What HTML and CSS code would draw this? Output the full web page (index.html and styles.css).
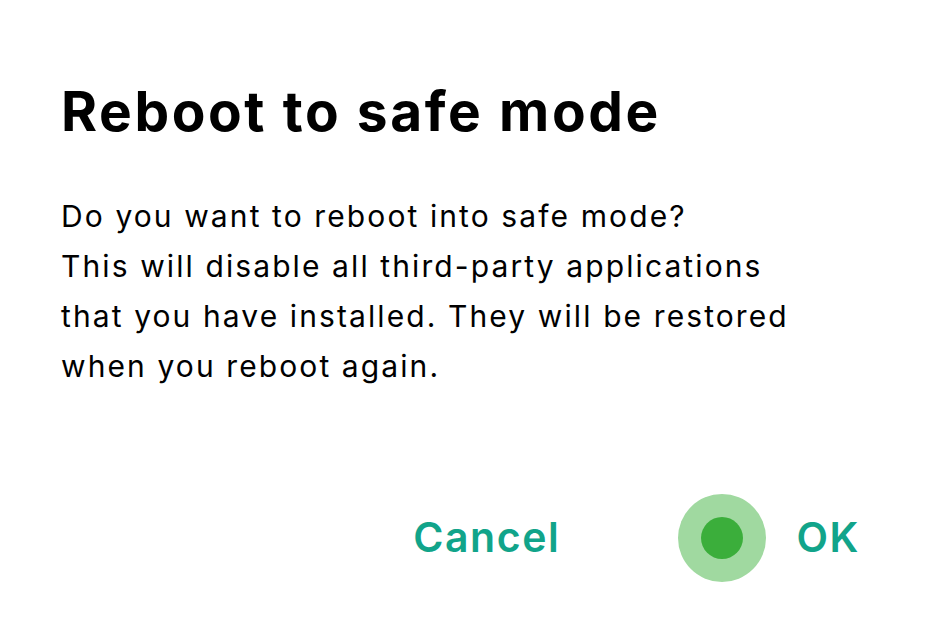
FILE: index.html
```html
<!DOCTYPE html>
<html lang="en">
<head>
<meta charset="utf-8">
<title>Reboot to safe mode</title>
<link rel="stylesheet" href="styles.css">
</head>
<body>
<div class="dialog">
  <h1 class="title">Reboot to safe mode</h1>
  <p class="message">Do you want to reboot into safe mode?<br>This will disable all third-party applications<br>that you have installed. They will be restored<br>when you reboot again.</p>
  <div class="actions">
    <button class="btn">Cancel</button>
    <button class="btn">OK</button>
  </div>
  <div class="touch"><div class="touch-dot"></div></div>
</div>
</body>
</html>
```

FILE: styles.css
```css
html, body {
  background: #ffffff;
}
body {
  margin: 4px 8px;
  font-family: Inter, "Noto Sans", "Liberation Sans", sans-serif;
  color: #000;
}
.dialog {
  position: relative;
  box-sizing: border-box;
  width: 911px;
  height: 604px;
  background: #fff;
  padding: 74px 40px 0 53px;
  box-shadow: 0 3px 4px rgba(0,0,0,0.4), 1px 0 3px rgba(0,0,0,0.2), 0 0 2px rgba(0,0,0,0.12);
  display: flex;
  flex-direction: column;
}
.title {
  margin: 0;
  font-size: 55px;
  line-height: 66px;
  font-weight: 700;
  letter-spacing: 2.6px;
}
.message {
  margin: 47px 0 0;
  font-size: 30px;
  line-height: 50px;
  font-weight: 400;
  letter-spacing: 2.1px;
}
.actions {
  margin-top: 121px;
  display: flex;
  justify-content: flex-end;
  gap: 236px;
  padding-right: 19px;
}
.btn {
  border: 0;
  background: none;
  padding: 0;
  font-family: inherit;
  font-size: 41px;
  line-height: 50px;
  font-weight: 600;
  letter-spacing: 1.6px;
  color: #11a48a;
}
.touch {
  position: absolute;
  left: 670px;
  top: 490px;
  width: 88px;
  height: 88px;
  border-radius: 50%;
  background: #a0d9a0;
  display: flex;
  align-items: center;
  justify-content: center;
}
.touch-dot {
  width: 42px;
  height: 42px;
  border-radius: 50%;
  background: #3bae3b;
}
```
